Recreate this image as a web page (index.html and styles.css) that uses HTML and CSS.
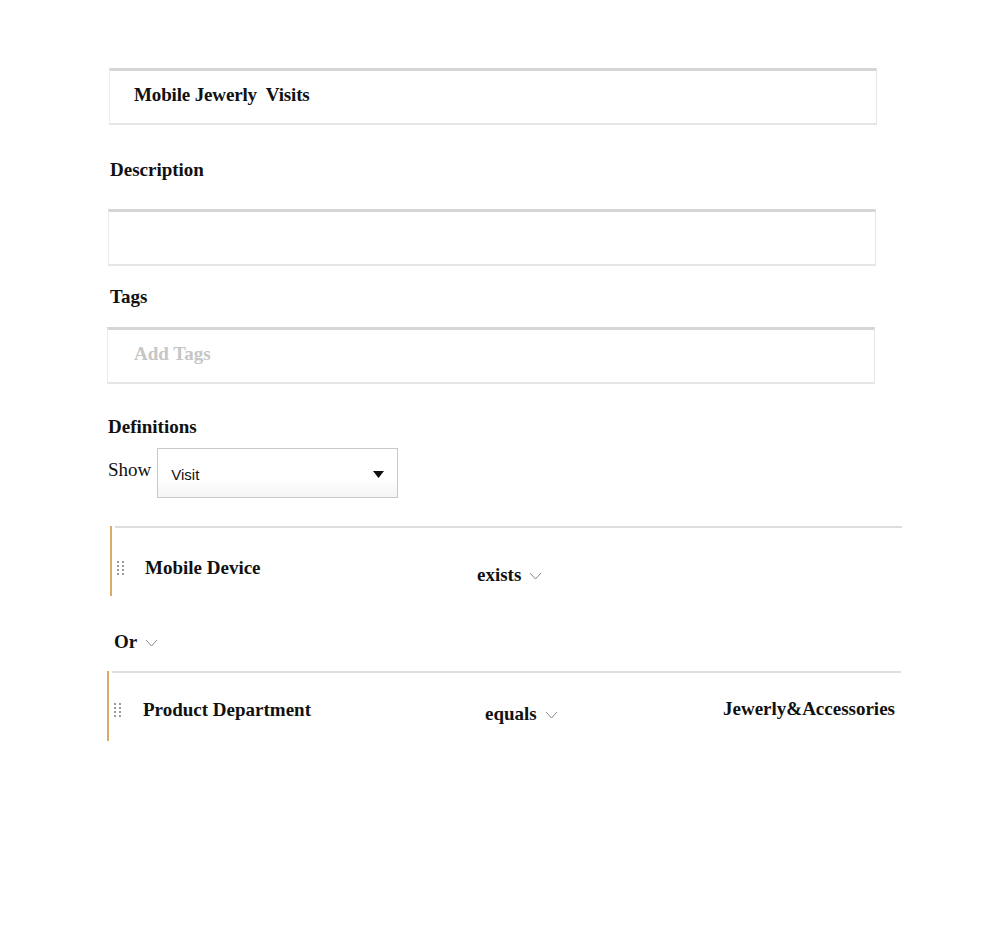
FILE: index.html
```html
<!DOCTYPE html>
<html lang="en">
<head>
    <meta charset="UTF-8">
    <title>Segment Editor</title>
    <link rel="stylesheet" href="styles.css">
</head>
<body>
    <div class="segment-form">
        <div class="field-box title-box">Mobile Jewerly&nbsp; Visits</div>

        <h3 class="field-label label-description">Description</h3>
        <div class="field-box"></div>

        <h3 class="field-label label-tags">Tags</h3>
        <div class="field-box placeholder">Add Tags</div>

        <h3 class="field-label label-definitions">Definitions</h3>
        <div class="show-row">
            <span class="show-text">Show</span>
            <div class="select-box">
                <span>Visit</span>
                <svg class="select-arrow" width="11" height="7" viewBox="0 0 11 7"><polygon points="0,0 11,0 5.5,7" fill="#111"/></svg>
            </div>
        </div>

        <div class="rule rule-first">
            <div class="rule-body">
                <svg class="grip" width="8" height="16" viewBox="0 0 8 16">
                    <g fill="#9a9a9a">
                        <rect x="0" y="0" width="2" height="2"/><rect x="5" y="0" width="2" height="2"/>
                        <rect x="0" y="4" width="2" height="2"/><rect x="5" y="4" width="2" height="2"/>
                        <rect x="0" y="8" width="2" height="2"/><rect x="5" y="8" width="2" height="2"/>
                        <rect x="0" y="12" width="2" height="2"/><rect x="5" y="12" width="2" height="2"/>
                    </g>
                </svg>
                <span class="rule-name">Mobile Device</span>
                <span class="rule-op">exists <svg class="chev" width="13" height="8" viewBox="0 0 13 8"><polyline points="1,1 6.5,7 12,1" fill="none" stroke="#888" stroke-width="1"/></svg></span>
                <span class="rule-value"></span>
            </div>
        </div>

        <div class="joiner">Or <svg class="chev" width="13" height="8" viewBox="0 0 13 8"><polyline points="1,1 6.5,7 12,1" fill="none" stroke="#888" stroke-width="1"/></svg></div>

        <div class="rule rule-second">
            <div class="rule-body">
                <svg class="grip" width="8" height="16" viewBox="0 0 8 16">
                    <g fill="#9a9a9a">
                        <rect x="0" y="0" width="2" height="2"/><rect x="5" y="0" width="2" height="2"/>
                        <rect x="0" y="4" width="2" height="2"/><rect x="5" y="4" width="2" height="2"/>
                        <rect x="0" y="8" width="2" height="2"/><rect x="5" y="8" width="2" height="2"/>
                        <rect x="0" y="12" width="2" height="2"/><rect x="5" y="12" width="2" height="2"/>
                    </g>
                </svg>
                <span class="rule-name">Product Department</span>
                <span class="rule-op">equals <svg class="chev" width="13" height="8" viewBox="0 0 13 8"><polyline points="1,1 6.5,7 12,1" fill="none" stroke="#888" stroke-width="1"/></svg></span>
                <span class="rule-value">Jewerly&amp;Accessories</span>
            </div>
        </div>
    </div>
</body>
</html>
```

FILE: styles.css
```css
body {
    margin: 0;
    background: #fff;
    color: #111;
    font-family: "Liberation Serif", "Times New Roman", serif;
}
.segment-form {
    padding: 68px 0 0 108px;
    width: 794px;
}
.field-box {
    box-sizing: border-box;
    width: 768px;
    height: 57px;
    padding: 0 24px 4px;
    display: flex;
    align-items: center;
    border-top: 3px solid #d6d6d6;
    border-left: 1px solid #ececec;
    border-right: 1px solid #e6e6e6;
    border-bottom: 2px solid #e6e6e6;
    font-size: 19px;
    font-weight: bold;
}
.title-box {
    margin-left: 1px;
    letter-spacing: -0.15px;
}
.placeholder {
    color: #c6c6c6;
    margin-left: -1px;
    padding-left: 26px;
}
.field-label {
    margin: 0;
    font-size: 19px;
    line-height: 22px;
    font-weight: bold;
    padding-left: 2px;
}
.label-description {
    margin: 34px 0 28px;
}
.label-tags {
    margin: 20px 0 19px;
}
.label-definitions {
    margin: 32px 0 10px;
    padding-left: 0;
}
.show-row {
    display: flex;
    align-items: flex-start;
    gap: 6px;
}
.show-text {
    font-size: 19px;
    line-height: 22px;
    margin-top: 11px;
}
.select-box {
    box-sizing: border-box;
    width: 241px;
    height: 50px;
    border: 1px solid #c8c8c8;
    background: linear-gradient(#fff 60%, #f4f4f4);
    display: flex;
    align-items: center;
    justify-content: space-between;
    padding: 2px 13px 0 13px;
    font-family: "Liberation Sans", Arial, sans-serif;
    font-size: 15px;
}
.select-arrow {
    margin-top: 1px;
}
.rule {
    border-left: 2px solid #dcaa66;
    height: 70px;
}
.rule-first {
    margin-top: 28px;
    margin-left: 2px;
}
.rule-second {
    margin-left: -1px;
    width: 792px;
}
.rule-body {
    margin-left: 3px;
    height: 100%;
    border-top: 2px solid #dedede;
    display: grid;
    grid-template-columns: 28px 332px 242px 1fr;
    align-items: start;
    padding-top: 29px;
    padding-left: 2px;
    box-sizing: border-box;
    font-size: 19px;
    line-height: 22px;
    font-weight: bold;
}
.rule-second .rule-body {
    padding-top: 26px;
    grid-template-columns: 29px 342px 238px 1fr;
}
.grip {
    margin-top: 4px;
}
.rule-op {
    margin-top: 7px;
}
.rule-second .rule-op {
    margin-top: 4px;
}
.rule-value {
    margin-top: -1px;
}
.chev {
    margin-left: 3px;
    vertical-align: 1px;
}
.joiner {
    margin: 35px 0 18px 6px;
    font-size: 19px;
    line-height: 22px;
    font-weight: bold;
}
```
